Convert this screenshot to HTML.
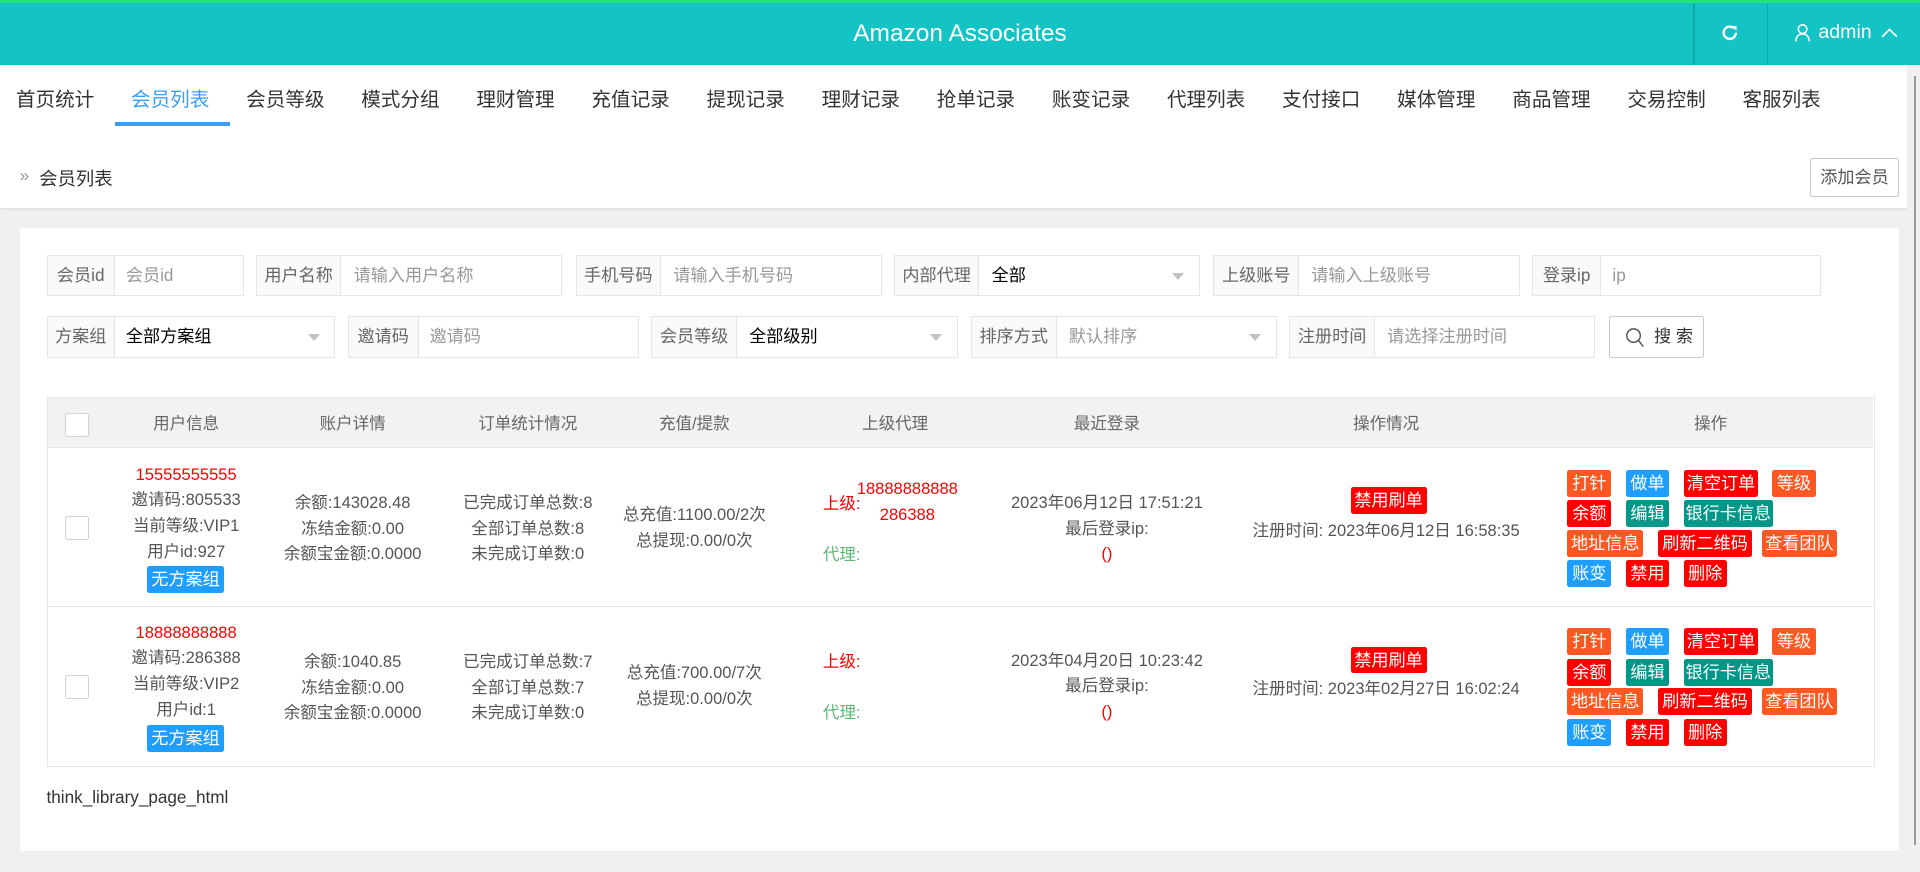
<!DOCTYPE html>
<html><head><meta charset="utf-8"><style>
*{box-sizing:border-box;margin:0;padding:0}
html,body{width:1920px;height:872px;overflow:hidden;background:#f0f0f0}
#w{zoom:1.22449;width:1568px;height:712px;position:relative;font-family:"Liberation Sans","Noto Sans CJK SC",sans-serif;color:#333;font-size:14px}
.a{position:absolute}
.top{left:0;top:0;width:1568px;height:53px;background:#14c3c3;border-top:3px solid #22e07a}
.nav{left:0;top:53px;width:1568px;height:117px;background:#fff;box-shadow:0 1px 3px rgba(0,0,0,.12)}
.nav span{position:absolute;top:15px;font-size:16px;color:#333}
.card{left:16px;top:186px;width:1535px;height:509px;background:#fff}
.f{position:absolute;height:34px;border:1px solid #e6e6e6;background:#fff;font-size:14px}
.f b{font-weight:normal;position:absolute;left:0;top:0;bottom:0;background:#fafafa;border-right:1px solid #e6e6e6;color:#666;line-height:32px;text-align:center}
.f i{font-style:normal;position:absolute;top:0;line-height:32px;color:#999}
.f i.v{color:#000}
.f em{position:absolute;right:12px;top:14px;border:5px solid transparent;border-top:6px solid #c2c2c2}
.tc{text-align:center;position:absolute;line-height:21px;font-size:13.5px;color:#555}
.btn{position:absolute;height:22px;line-height:22px;color:#fff;font-size:14px;text-align:center;border-radius:2px}
.o{background:#ff5722}.bl{background:#1e9fff}.r{background:#ff0000}.t{background:#009688}
.cb{position:absolute;width:20px;height:20px;border:1px solid #d2d2d2;background:#fff;border-radius:2px}
</style></head><body><div id="w">
<div class="a top"></div>
<div class="a" style="left:0;top:16px;width:1568px;text-align:center;color:#fff;font-size:20px">Amazon Associates</div>
<div class="a" style="left:1383px;top:3px;width:1px;height:50px;background:#0fa9a9"></div>
<div class="a" style="left:1443px;top:3px;width:1px;height:50px;background:#0fa9a9"></div>
<svg class="a" style="left:1405px;top:19px" width="16" height="16" viewBox="0 0 16 16"><path d="M13 8a5 5 0 1 1-1.6-3.7" fill="none" stroke="#fff" stroke-width="2"/><path d="M9.5 2.5h4v4z" fill="#fff"/></svg>
<svg class="a" style="left:1465px;top:19px" width="14" height="16" viewBox="0 0 14 16"><circle cx="7" cy="5" r="3.5" fill="none" stroke="#fff" stroke-width="1.3"/><path d="M1.5 15c0-4 2.5-6 5.5-6s5.5 2 5.5 6" fill="none" stroke="#fff" stroke-width="1.3"/></svg>
<div class="a" style="left:1485px;top:17px;color:#fff;font-size:16px">admin</div>
<svg class="a" style="left:1536px;top:22px" width="14" height="9" viewBox="0 0 14 9"><path d="M1 8l6-6 6 6" fill="none" stroke="#fff" stroke-width="1.4"/></svg>
<div class="a nav">
<span style="left:13px">首页统计</span><span style="left:107px;color:#3a9ff3">会员列表</span><span style="left:201px">会员等级</span><span style="left:295px">模式分组</span><span style="left:389px">理财管理</span><span style="left:483px">充值记录</span><span style="left:577px">提现记录</span><span style="left:671px">理财记录</span><span style="left:765px">抢单记录</span><span style="left:859px">账变记录</span><span style="left:953px">代理列表</span><span style="left:1047px">支付接口</span><span style="left:1141px">媒体管理</span><span style="left:1235px">商品管理</span><span style="left:1329px">交易控制</span><span style="left:1423px">客服列表</span>
<div class="a" style="left:94px;top:47px;width:94px;height:3px;background:#3a9ff3"></div>
<div class="a" style="left:16px;top:82px;color:#999;font-size:14px">»</div>
<div class="a" style="left:32px;top:82px;font-size:15px">会员列表</div>
<div class="a" style="left:1478px;top:76px;width:73px;height:32px;border:1px solid #c9c9c9;border-radius:2px;line-height:30px;text-align:center;color:#555;font-size:14px">添加会员</div>
</div>
<div class="a" style="left:1557px;top:53px;width:11px;height:659px;background:#f0f0f0"></div>
<div class="a" style="left:1563px;top:62px;width:2px;height:628px;background:#999"></div>
<div class="a card"></div>
<div class="f" style="left:38px;top:208px;width:161px"><b style="width:55px">会员id</b><i style="left:64px">会员id</i></div>
<div class="f" style="left:209px;top:208px;width:250px"><b style="width:69px">用户名称</b><i style="left:79px">请输入用户名称</i></div>
<div class="f" style="left:470px;top:208px;width:250px"><b style="width:69px">手机号码</b><i style="left:79px">请输入手机号码</i></div>
<div class="f" style="left:730px;top:208px;width:250px"><b style="width:69px">内部代理</b><i class="v" style="left:79px">全部</i><em></em></div>
<div class="f" style="left:991px;top:208px;width:250px"><b style="width:69px">上级账号</b><i style="left:79px">请输入上级账号</i></div>
<div class="f" style="left:1251px;top:208px;width:236px"><b style="width:56px">登录ip</b><i style="left:65px">ip</i></div>
<div class="f" style="left:38px;top:258px;width:236px"><b style="width:55px">方案组</b><i class="v" style="left:64px">全部方案组</i><em></em></div>
<div class="f" style="left:284px;top:258px;width:238px"><b style="width:57px">邀请码</b><i style="left:66px">邀请码</i></div>
<div class="f" style="left:532px;top:258px;width:250px"><b style="width:69px">会员等级</b><i class="v" style="left:79px">全部级别</i><em></em></div>
<div class="f" style="left:793px;top:258px;width:250px"><b style="width:69px">排序方式</b><i style="left:79px">默认排序</i><em></em></div>
<div class="f" style="left:1053px;top:258px;width:250px"><b style="width:69px">注册时间</b><i style="left:79px">请选择注册时间</i></div>
<div class="f" style="left:1314px;top:258px;width:78px;border-color:#c9c9c9;border-radius:2px"><svg class="a" style="left:12px;top:8px" width="16" height="18" viewBox="0 0 16 18"><circle cx="7" cy="7" r="5.5" fill="none" stroke="#555" stroke-width="1.2"/><path d="M11 11l4 5" stroke="#555" stroke-width="1.2"/></svg><i style="left:36px;color:#333">搜 索</i></div>
<div class="a" style="left:38px;top:324px;width:1493px;height:302px;border:1px solid #e6e6e6"></div>
<div class="a" style="left:39px;top:325px;width:1491px;height:41px;background:#f2f2f2;border-bottom:1px solid #e6e6e6"></div>
<div class="a" style="left:39px;top:495px;width:1491px;height:1px;background:#e6e6e6"></div>
<div class="cb" style="left:53px;top:337px"></div>
<div class="tc" style="left:92px;top:336px;width:120px;color:#666">用户信息</div>
<div class="tc" style="left:228px;top:336px;width:120px;color:#666">账户详情</div>
<div class="tc" style="left:361px;top:336px;width:140px;color:#666">订单统计情况</div>
<div class="tc" style="left:507px;top:336px;width:120px;color:#666">充值/提款</div>
<div class="tc" style="left:671px;top:336px;width:120px;color:#666">上级代理</div>
<div class="tc" style="left:844px;top:336px;width:120px;color:#666">最近登录</div>
<div class="tc" style="left:1072px;top:336px;width:120px;color:#666">操作情况</div>
<div class="tc" style="left:1337px;top:336px;width:120px;color:#666">操作</div>

<div class="cb" style="left:53px;top:421px"></div>
<div class="tc" style="left:82px;top:377px;width:140px"><span style="color:#f00">15555555555</span><br>邀请码:805533<br>当前等级:VIP1<br>用户id:927</div>
<div class="btn bl" style="left:120px;top:462px;width:63px">无方案组</div>
<div class="tc" style="left:208px;top:400px;width:160px">余额:143028.48<br>冻结金额:0.00<br>余额宝金额:0.0000</div>
<div class="tc" style="left:356px;top:400px;width:150px">已完成订单总数:8<br>全部订单总数:8<br>未完成订单数:0</div>
<div class="tc" style="left:497px;top:410px;width:140px">总充值:1100.00/2次<br>总提现:0.00/0次</div>
<div class="tc" style="left:672px;top:401px;color:#f00">上级:</div>
<div class="tc" style="left:686px;top:389px;width:110px;color:#f00">18888888888<br>286388</div>
<div class="tc" style="left:672px;top:443px;color:#5fb878">代理:</div>
<div class="tc" style="left:804px;top:400px;width:200px">2023年06月12日 17:51:21<br>最后登录ip:<br><span style="color:#f00">()</span></div>
<div class="btn r" style="left:1103px;top:398px;width:62px">禁用刷单</div>
<div class="tc" style="left:1012px;top:423px;width:240px">注册时间:&nbsp;2023年06月12日 16:58:35</div>

<div class="cb" style="left:53px;top:551px"></div>
<div class="tc" style="left:82px;top:506px;width:140px"><span style="color:#f00">18888888888</span><br>邀请码:286388<br>当前等级:VIP2<br>用户id:1</div>
<div class="btn bl" style="left:120px;top:592px;width:63px">无方案组</div>
<div class="tc" style="left:208px;top:530px;width:160px">余额:1040.85<br>冻结金额:0.00<br>余额宝金额:0.0000</div>
<div class="tc" style="left:356px;top:530px;width:150px">已完成订单总数:7<br>全部订单总数:7<br>未完成订单数:0</div>
<div class="tc" style="left:497px;top:539px;width:140px">总充值:700.00/7次<br>总提现:0.00/0次</div>
<div class="tc" style="left:672px;top:530px;color:#f00">上级:</div>
<div class="tc" style="left:672px;top:572px;color:#5fb878">代理:</div>
<div class="tc" style="left:804px;top:529px;width:200px">2023年04月20日 10:23:42<br>最后登录ip:<br><span style="color:#f00">()</span></div>
<div class="btn r" style="left:1103px;top:528px;width:62px">禁用刷单</div>
<div class="tc" style="left:1012px;top:552px;width:240px">注册时间:&nbsp;2023年02月27日 16:02:24</div>

<div class="btn o" style="left:1280px;top:384px;width:36px">打针</div><div class="btn bl" style="left:1328px;top:384px;width:35px">做单</div><div class="btn r" style="left:1375px;top:384px;width:61px">清空订单</div><div class="btn o" style="left:1447px;top:384px;width:36px">等级</div>
<div class="btn r" style="left:1280px;top:408px;width:36px">余额</div><div class="btn t" style="left:1328px;top:408px;width:35px">编辑</div><div class="btn t" style="left:1375px;top:408px;width:73px">银行卡信息</div>
<div class="btn o" style="left:1280px;top:433px;width:62px">地址信息</div><div class="btn r" style="left:1354px;top:433px;width:77px">刷新二维码</div><div class="btn o" style="left:1439px;top:433px;width:61px">查看团队</div>
<div class="btn bl" style="left:1280px;top:457px;width:36px">账变</div><div class="btn r" style="left:1328px;top:457px;width:35px">禁用</div><div class="btn r" style="left:1375px;top:457px;width:35px">删除</div>

<div class="btn o" style="left:1280px;top:513px;width:36px">打针</div><div class="btn bl" style="left:1328px;top:513px;width:35px">做单</div><div class="btn r" style="left:1375px;top:513px;width:61px">清空订单</div><div class="btn o" style="left:1447px;top:513px;width:36px">等级</div>
<div class="btn r" style="left:1280px;top:538px;width:36px">余额</div><div class="btn t" style="left:1328px;top:538px;width:35px">编辑</div><div class="btn t" style="left:1375px;top:538px;width:73px">银行卡信息</div>
<div class="btn o" style="left:1280px;top:562px;width:62px">地址信息</div><div class="btn r" style="left:1354px;top:562px;width:77px">刷新二维码</div><div class="btn o" style="left:1439px;top:562px;width:61px">查看团队</div>
<div class="btn bl" style="left:1280px;top:587px;width:36px">账变</div><div class="btn r" style="left:1328px;top:587px;width:35px">禁用</div><div class="btn r" style="left:1375px;top:587px;width:35px">删除</div>

<div class="a" style="left:38px;top:643px;font-size:14px;color:#333">think_library_page_html</div>
</div></body></html>
